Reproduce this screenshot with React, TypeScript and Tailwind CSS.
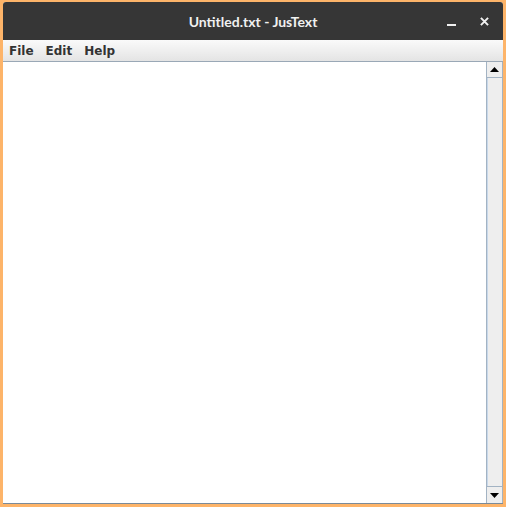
import React from "react";

export default function App() {
  return (
    <div className="w-[506px] h-[507px] bg-[#fdb469] p-[3px] pt-[2px] flex flex-col">
      <div className="flex-1 flex flex-col bg-white rounded-t-[3px] overflow-hidden">
        {/* Title bar */}
        <div className="h-[38px] bg-[#363636] flex items-center relative shrink-0">
          <div
            className="absolute inset-0 flex items-center justify-center text-[14px] font-bold text-[#f0f0f0]"
            style={{ fontFamily: 'Lato, "Open Sans", sans-serif' }}
          >
            Untitled.txt - JusText
          </div>
          <div className="absolute right-[14px] top-0 h-full flex items-center gap-[24px]">
            <div className="w-[9px] h-[2px] bg-[#f0f0f0] mt-[8px]" />
            <svg width="9" height="9" viewBox="0 0 10 10">
              <path d="M1 1 L9 9 M9 1 L1 9" stroke="#f0f0f0" strokeWidth="2.2" />
            </svg>
          </div>
        </div>
        {/* Menu bar */}
        <div
          className="h-[22px] shrink-0 flex items-center gap-[12px] pl-[6px] pt-[1px] bg-gradient-to-b from-[#fafafa] to-[#e4e4e4] border-b border-[#9aa8b6] text-[12px] font-bold text-[#333333]"
          style={{ fontFamily: '"DejaVu Sans", sans-serif' }}
        >
          <span>File</span>
          <span>Edit</span>
          <span>Help</span>
        </div>
        {/* Editor */}
        <div className="flex-1 flex border-[#7a8a99] border-b min-h-0">
          <div className="flex-1 bg-white" />
          <div className="w-[17px] flex flex-col bg-[#eeeeee] border-l border-r border-[#a3b3c3]">
            <div className="h-[16px] flex items-center justify-center border-b border-[#a3b3c3] bg-[#eeeeee]">
              <svg width="9" height="5" viewBox="0 0 9 5">
                <path d="M0 5 L4.5 0 L9 5 Z" fill="#000" />
              </svg>
            </div>
            <div className="flex-1 border-l border-[#c8d8ea]" />
            <div className="h-[17px] flex items-center justify-center border-t border-[#a3b3c3] bg-[#eeeeee]">
              <svg width="9" height="5" viewBox="0 0 9 5">
                <path d="M0 0 L9 0 L4.5 5 Z" fill="#000" />
              </svg>
            </div>
          </div>
        </div>
      </div>
    </div>
  );
}
